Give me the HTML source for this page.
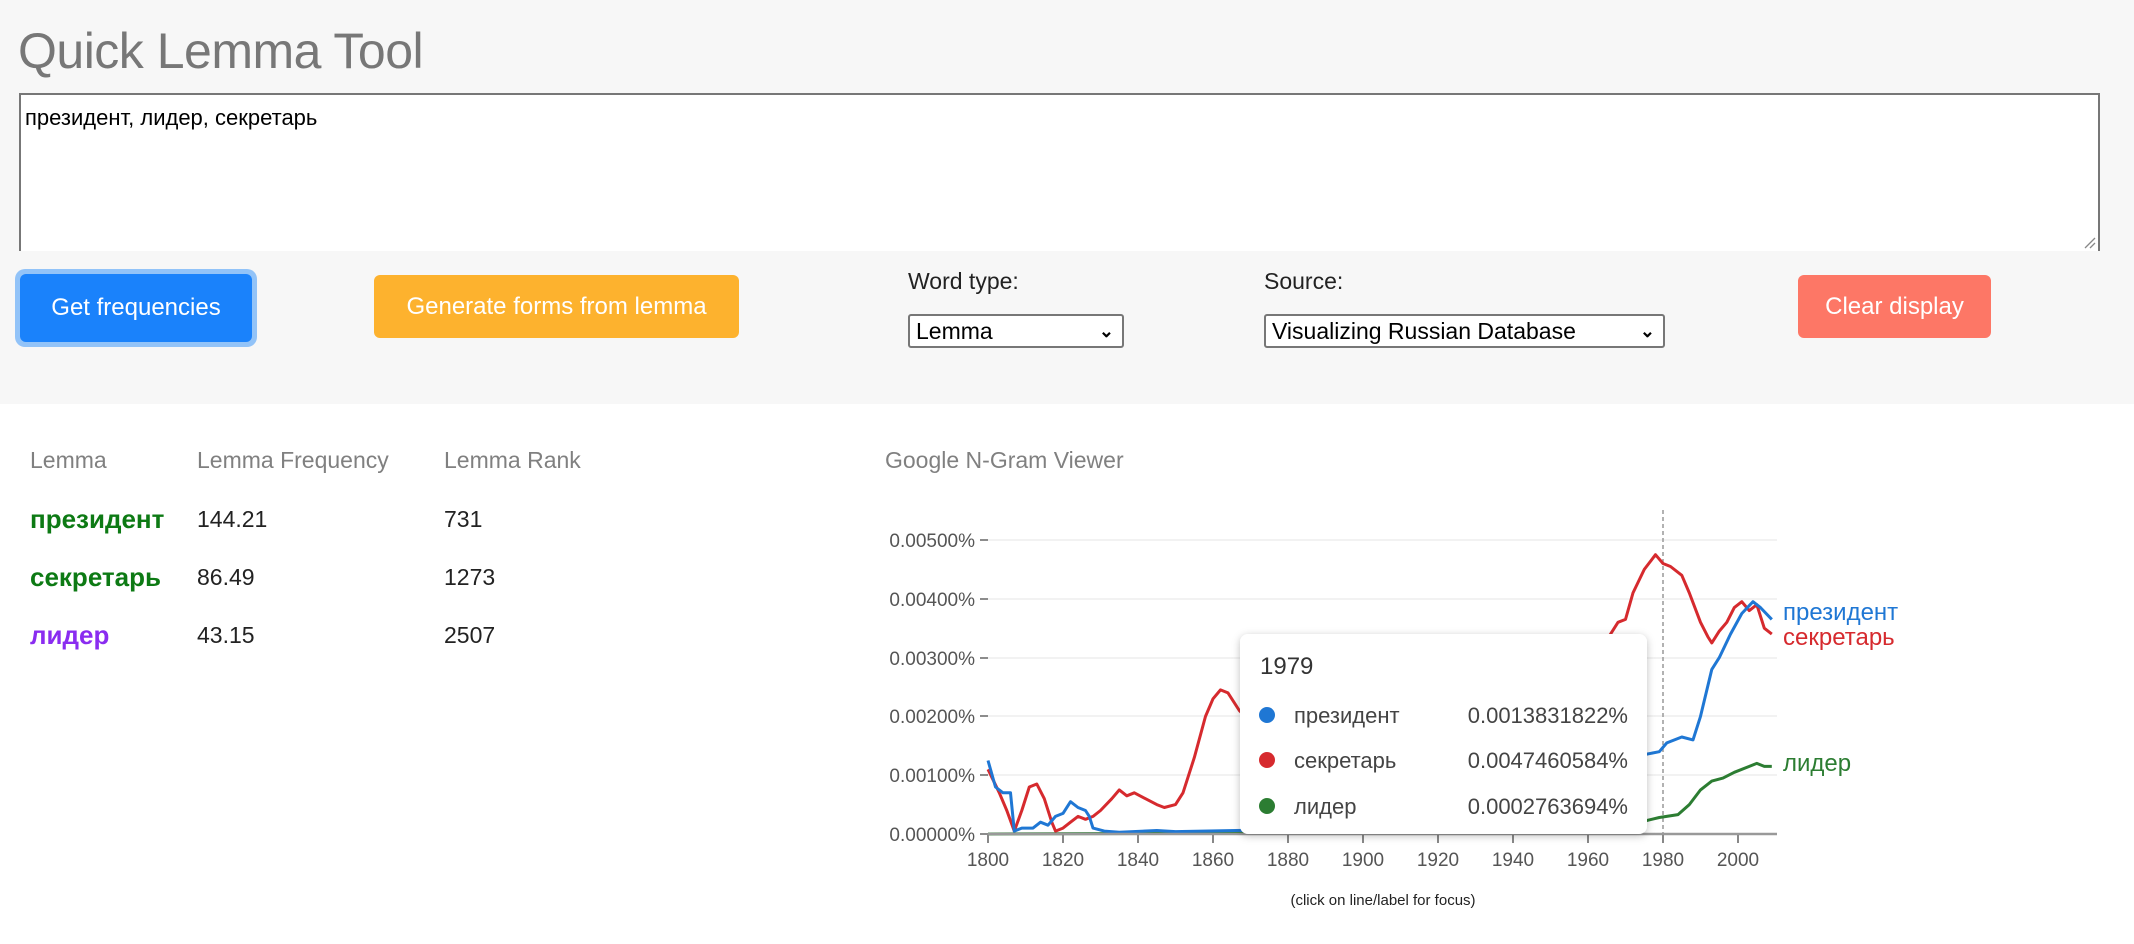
<!DOCTYPE html>
<html><head><meta charset="utf-8">
<style>
html,body{margin:0;padding:0;width:2134px;height:944px;overflow:hidden;background:#fff;font-family:"Liberation Sans",Arial,sans-serif;}
.top{position:absolute;left:0;top:0;width:2134px;height:404px;background:#f7f7f7;}
.abs{position:absolute;}
h1{position:absolute;left:18px;top:22px;margin:0;font-weight:normal;font-size:50px;color:#777;letter-spacing:-0.5px;}
.ta{position:absolute;left:19px;top:93px;width:2081px;height:158px;background:#fff;border:2px solid #777;border-bottom:none;box-sizing:border-box;}
.ta span{position:absolute;left:4px;top:10px;font-size:22px;color:#000;}
.btn{position:absolute;color:#fff;font-size:24px;display:flex;align-items:center;justify-content:center;border-radius:6px;}
.lbl{position:absolute;font-size:23px;color:#222;}
.sel{position:absolute;background:#fff;border:2px solid #777;border-radius:3px;box-sizing:border-box;font-size:23px;color:#000;padding-left:6px;line-height:30px;}
.sel i{position:absolute;right:8px;top:0;font-style:normal;font-weight:bold;font-size:18px;}
.th{position:absolute;font-size:23px;color:#808080;top:447px;}
.td{position:absolute;font-size:23px;color:#222;}
.lem{position:absolute;font-size:26px;font-weight:bold;}
</style></head><body>
<div class="top"></div>
<h1>Quick Lemma Tool</h1>
<div class="ta"><span>президент, лидер, секретарь</span>
<svg class="abs" style="right:2px;bottom:2px" width="14" height="14"><path d="M3 13 L13 3 M8 13 L13 8" stroke="#888" stroke-width="1.3"/></svg></div>

<div class="abs" style="left:15px;top:269px;width:242px;height:78px;border-radius:10px;background:#92c3f8;"></div>
<div class="btn" style="left:20px;top:274px;width:232px;height:68px;background:#1a82fb;">Get frequencies</div>
<div class="btn" style="left:374px;top:275px;width:365px;height:63px;background:#fdb22e;">Generate forms from lemma</div>
<div class="btn" style="left:1798px;top:275px;width:193px;height:63px;background:#fd7766;">Clear display</div>

<div class="lbl" style="left:908px;top:268px;">Word type:</div>
<div class="sel" style="left:908px;top:314px;width:216px;height:34px;">Lemma<i>&#8964;</i></div>
<div class="lbl" style="left:1264px;top:268px;">Source:</div>
<div class="sel" style="left:1264px;top:314px;width:401px;height:34px;">Visualizing Russian Database<i>&#8964;</i></div>

<div class="th" style="left:30px;">Lemma</div>
<div class="th" style="left:197px;">Lemma Frequency</div>
<div class="th" style="left:444px;">Lemma Rank</div>
<div class="lem" style="left:30px;top:504px;color:#0d7a14;">президент</div>
<div class="td" style="left:197px;top:506px;">144.21</div>
<div class="td" style="left:444px;top:506px;">731</div>
<div class="lem" style="left:30px;top:562px;color:#0d7a14;">секретарь</div>
<div class="td" style="left:197px;top:564px;">86.49</div>
<div class="td" style="left:444px;top:564px;">1273</div>
<div class="lem" style="left:30px;top:620px;color:#8a2cf0;">лидер</div>
<div class="td" style="left:197px;top:622px;">43.15</div>
<div class="td" style="left:444px;top:622px;">2507</div>

<div class="th" style="left:885px;">Google N-Gram Viewer</div>

<svg class="abs" style="left:0;top:0" width="2134" height="944" id="ch">
<g stroke="#eee" stroke-width="1.5">
<line x1="988" x2="1777" y1="540" y2="540"/><line x1="988" x2="1777" y1="599" y2="599"/><line x1="988" x2="1777" y1="658" y2="658"/><line x1="988" x2="1777" y1="716" y2="716"/><line x1="988" x2="1777" y1="775" y2="775"/>
</g>
<g stroke="#666" stroke-width="1.5">
<line x1="980" x2="988" y1="540" y2="540"/><line x1="980" x2="988" y1="599" y2="599"/><line x1="980" x2="988" y1="658" y2="658"/><line x1="980" x2="988" y1="716" y2="716"/><line x1="980" x2="988" y1="775" y2="775"/><line x1="980" x2="988" y1="834" y2="834"/>
</g>
<g font-size="19" fill="#555" text-anchor="end" font-family="Liberation Sans,Arial,sans-serif">
<text x="975" y="547">0.00500%</text><text x="975" y="606">0.00400%</text><text x="975" y="665">0.00300%</text><text x="975" y="723">0.00200%</text><text x="975" y="782">0.00100%</text><text x="975" y="841">0.00000%</text>
</g>
<line x1="1663" x2="1663" y1="510" y2="834" stroke="#999" stroke-width="1.5" stroke-dasharray="4,3"/>
<g id="lines" fill="none" stroke-width="3" stroke-linejoin="round"></g>
<line x1="988" x2="1777" y1="834" y2="834" stroke="#999" stroke-width="2.5"/>
<g stroke="#888" stroke-width="2" id="xt"></g>
<g font-size="19" fill="#555" text-anchor="middle" font-family="Liberation Sans,Arial,sans-serif" id="xl"></g>
<g font-size="24" font-family="Liberation Sans,Arial,sans-serif">
<text x="1783" y="620" fill="#1f77d4">президент</text>
<text x="1783" y="645" fill="#d62a2e">секретарь</text>
<text x="1783" y="771" fill="#2c7d32">лидер</text>
</g>
<text x="1383" y="905" font-size="15" fill="#222" text-anchor="middle" font-family="Liberation Sans,Arial,sans-serif">(click on line/label for focus)</text>
<defs><filter id="sh" x="-10%" y="-10%" width="120%" height="130%"><feDropShadow dx="0" dy="2" stdDeviation="4" flood-color="#000" flood-opacity="0.25"/></filter></defs>
<rect x="1240" y="634" width="407" height="200" rx="8" fill="#fff" filter="url(#sh)"/>
<g font-family="Liberation Sans,Arial,sans-serif" fill="#444">
<text x="1260" y="674" font-size="24" fill="#333">1979</text>
<circle cx="1267" cy="715" r="8" fill="#1f77d4"/><text x="1294" y="723" font-size="22">президент</text><text x="1628" y="723" font-size="22" text-anchor="end">0.0013831822%</text>
<circle cx="1267" cy="760" r="8" fill="#d62a2e"/><text x="1294" y="768" font-size="22">секретарь</text><text x="1628" y="768" font-size="22" text-anchor="end">0.0047460584%</text>
<circle cx="1267" cy="806" r="8" fill="#2c7d32"/><text x="1294" y="814" font-size="22">лидер</text><text x="1628" y="814" font-size="22" text-anchor="end">0.0002763694%</text>
</g>
</svg>
<script>
(function(){
var X=function(y){return 988+(y-1800)*3.75},Y=function(v){return 834-v*58.8};
var red=[[1800,1.1],[1803,0.7],[1805,0.4],[1807,0.05],[1809,0.4],[1811,0.8],[1813,0.85],[1815,0.6],[1817,0.2],[1818,0.05],[1820,0.1],[1822,0.2],[1824,0.3],[1826,0.25],[1828,0.3],[1830,0.4],[1833,0.6],[1835,0.75],[1837,0.65],[1839,0.7],[1842,0.6],[1845,0.5],[1847,0.45],[1850,0.5],[1852,0.7],[1855,1.3],[1858,2.0],[1860,2.3],[1862,2.45],[1864,2.4],[1867,2.1],[1872,1.8],[1880,1.6],[1900,1.7],[1920,1.9],[1940,2.3],[1955,2.8],[1965,3.3],[1968,3.6],[1970,3.65],[1972,4.1],[1975,4.5],[1978,4.75],[1980,4.6],[1982,4.55],[1985,4.4],[1987,4.1],[1990,3.6],[1992,3.35],[1993,3.25],[1995,3.45],[1997,3.6],[1999,3.85],[2001,3.95],[2003,3.8],[2005,3.9],[2007,3.5],[2009,3.4]];
var blue=[[1800,1.25],[1802,0.8],[1804,0.7],[1806,0.7],[1807,0.05],[1809,0.1],[1812,0.1],[1814,0.2],[1816,0.15],[1818,0.3],[1820,0.35],[1822,0.55],[1824,0.45],[1826,0.4],[1827,0.3],[1828,0.1],[1831,0.05],[1835,0.03],[1845,0.06],[1850,0.04],[1866,0.06],[1900,0.1],[1940,0.5],[1960,0.9],[1970,1.2],[1975,1.35],[1979,1.4],[1981,1.55],[1985,1.65],[1988,1.6],[1990,2.0],[1993,2.8],[1995,3.0],[1998,3.4],[2001,3.75],[2004,3.95],[2006,3.85],[2009,3.65]];
var green=[[1800,0],[1900,0.02],[1950,0.08],[1970,0.15],[1975,0.22],[1979,0.28],[1984,0.33],[1987,0.5],[1990,0.75],[1993,0.9],[1996,0.95],[1999,1.05],[2003,1.15],[2005,1.2],[2007,1.15],[2009,1.15]];
function P(a){return a.map(function(p,i){return (i?'L':'M')+X(p[0]).toFixed(1)+' '+Y(p[1]).toFixed(1)}).join(' ')}
var g=document.getElementById('lines');
[[green,'#2c7d32'],[red,'#d62a2e'],[blue,'#1f77d4']].forEach(function(s){var p=document.createElementNS('http://www.w3.org/2000/svg','path');p.setAttribute('d',P(s[0]));p.setAttribute('stroke',s[1]);g.appendChild(p);});
var xt=document.getElementById('xt'),xl=document.getElementById('xl');
for(var y=1800;y<=2000;y+=20){var l=document.createElementNS('http://www.w3.org/2000/svg','line');l.setAttribute('x1',X(y));l.setAttribute('x2',X(y));l.setAttribute('y1',835);l.setAttribute('y2',843);xt.appendChild(l);
var t=document.createElementNS('http://www.w3.org/2000/svg','text');t.setAttribute('x',X(y));t.setAttribute('y',866);t.textContent=y;xl.appendChild(t);}
})();
</script>
</body></html>
